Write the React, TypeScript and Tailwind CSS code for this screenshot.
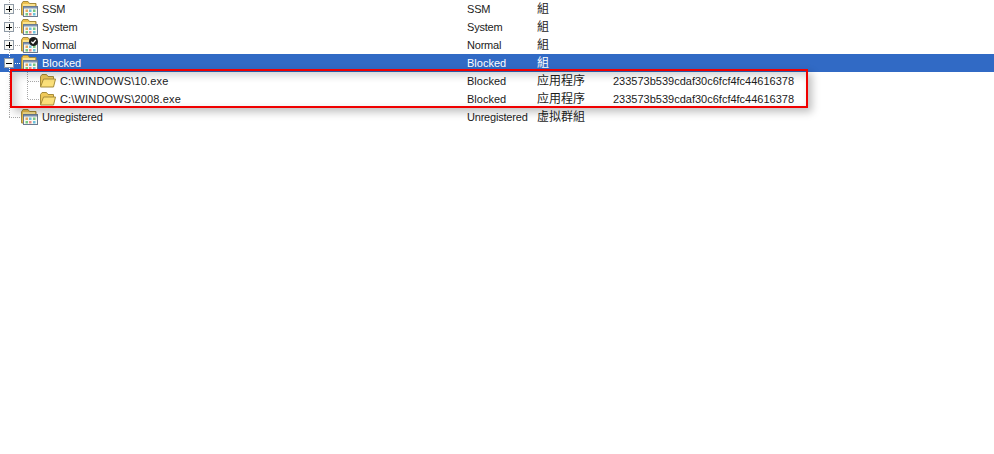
type RowData = {
  name: string;
  kind: string;
  type: string;
  hash?: string;
  level: 0 | 1;
  expander?: "plus" | "minus";
  check?: boolean;
  selected?: boolean;
  last?: boolean;
  lastChild?: boolean;
};

const HASH = "233573b539cdaf30c6fcf4fc44616378";

const rows: RowData[] = [
  { name: "SSM", kind: "SSM", type: "組", level: 0, expander: "plus" },
  { name: "System", kind: "System", type: "組", level: 0, expander: "plus" },
  { name: "Normal", kind: "Normal", type: "組", level: 0, expander: "plus", check: true },
  { name: "Blocked", kind: "Blocked", type: "組", level: 0, expander: "minus", selected: true },
  { name: "C:\\WINDOWS\\10.exe", kind: "Blocked", type: "应用程序", hash: HASH, level: 1 },
  { name: "C:\\WINDOWS\\2008.exe", kind: "Blocked", type: "应用程序", hash: HASH, level: 1, lastChild: true },
  { name: "Unregistered", kind: "Unregistered", type: "虚拟群組", level: 0, last: true },
];

function TreeLines({ row }: { row: RowData }) {
  return (
    <svg width="40" height="18" className="absolute left-0 top-0" shapeRendering="crispEdges">
      <g stroke={row.selected ? "#ffffff" : "#a8a8a8"} strokeDasharray="1 1" fill="none">
        <line x1="9.5" y1="0" x2="9.5" y2={row.last ? 9 : 18} />
        {row.level === 0 && <line x1="9" y1="9.5" x2="21" y2="9.5" />}
        {row.level === 1 && <line x1="27.5" y1="0" x2="27.5" y2={row.lastChild ? 9 : 18} />}
        {row.level === 1 && <line x1="28" y1="9.5" x2="40" y2="9.5" />}
      </g>
      {row.expander && (
        <g>
          <rect x="4.5" y="4.5" width="9" height="9" fill="#f8f8f4" stroke="#8f9aa6" />
          <line x1="6" y1="9.5" x2="12" y2="9.5" stroke="#000000" />
          {row.expander === "plus" && <line x1="9.5" y1="6" x2="9.5" y2="12" stroke="#000000" />}
        </g>
      )}
    </svg>
  );
}

function GroupIcon({ check }: { check?: boolean }) {
  return (
    <svg width="17" height="16" viewBox="0 0 17 16" className="shrink-0">
      <path d="M0.5 3 L2 0.5 H7 L8.5 2.5 H15 V14 H0.5 Z" fill="#edc04e" stroke="#a58a3c" />
      <rect x="2" y="3" width="12" height="2" fill="#fbe28c" />
      <rect x="2.5" y="5.5" width="14" height="10" fill="#fafaf2" stroke="#6b7b90" />
      <rect x="3" y="6" width="13" height="1.5" fill="#7f95b5" />
      <rect x="4.5" y="8.5" width="2.5" height="2.5" fill="#e8a860" />
      <rect x="8" y="8.5" width="2.5" height="2.5" fill="#6cc0e0" />
      <rect x="12" y="8.5" width="2.5" height="2.5" fill="#78c880" />
      <rect x="4.5" y="12" width="2.5" height="2.5" fill="#78c880" />
      <rect x="8" y="12" width="2.5" height="2.5" fill="#e88c8c" />
      <rect x="12" y="12" width="2.5" height="2.5" fill="#6cc0e0" />
      {check && (
        <g>
          <circle cx="12.5" cy="4.5" r="4.5" fill="#1c1c1c" />
          <path d="M10.3 4.6 L12 6.2 L14.8 2.9" stroke="#ffffff" strokeWidth="1.3" fill="none" />
        </g>
      )}
    </svg>
  );
}

function FolderIcon() {
  return (
    <svg width="16" height="14" viewBox="0 0 16 14" className="shrink-0">
      <path d="M0.5 12.5 V2.5 L2 0.5 H6.5 L8 2.5 H13.5 V5" fill="#efc95a" stroke="#a68c3a" />
      <path d="M0.5 13 L3.5 5 H15.5 L13.5 13 Z" fill="#fbe07a" stroke="#a68c3a" strokeLinejoin="round" />
    </svg>
  );
}

function TreeRow({ row }: { row: RowData }) {
  const color = row.selected ? "bg-[#316ac5] text-white" : "bg-white text-[#1c1c1c]";
  const nameTracking = row.level === 1 ? "tracking-[0.16px]" : row.selected ? "" : "tracking-[-0.2px]";
  return (
    <div className={`flex h-[18px] items-center ${color}`}>
      <div className={`relative flex h-full w-[467px] shrink-0 items-center gap-[4px] ${row.level === 1 ? "pl-[40px]" : "pl-[21px]"}`}>
        <TreeLines row={row} />
        {row.level === 1 ? <FolderIcon /> : <GroupIcon check={row.check} />}
        <span className={nameTracking}>{row.name}</span>
      </div>
      <div className={`w-[70px] shrink-0 ${row.kind === "Blocked" ? "" : "tracking-[-0.2px]"}`}>{row.kind}</div>
      <div className="w-[76px] shrink-0 text-[12px]">{row.type}</div>
      {row.hash && <div>{row.hash}</div>}
    </div>
  );
}

export default function App() {
  return (
    <div className="relative h-[454px] w-[994px] overflow-hidden bg-white font-['Liberation_Sans','Noto_Sans_CJK_SC',sans-serif] text-[11px] leading-[18px]">
      {rows.map((row) => (
        <TreeRow key={row.name} row={row} />
      ))}
      <div className="absolute left-[10px] top-[69px] h-[39px] w-[798px] border-2 border-[#f00000] shadow-[4px_4px_8px_rgba(0,0,0,0.25),inset_4px_4px_8px_rgba(0,0,0,0.2)]" />
    </div>
  );
}
